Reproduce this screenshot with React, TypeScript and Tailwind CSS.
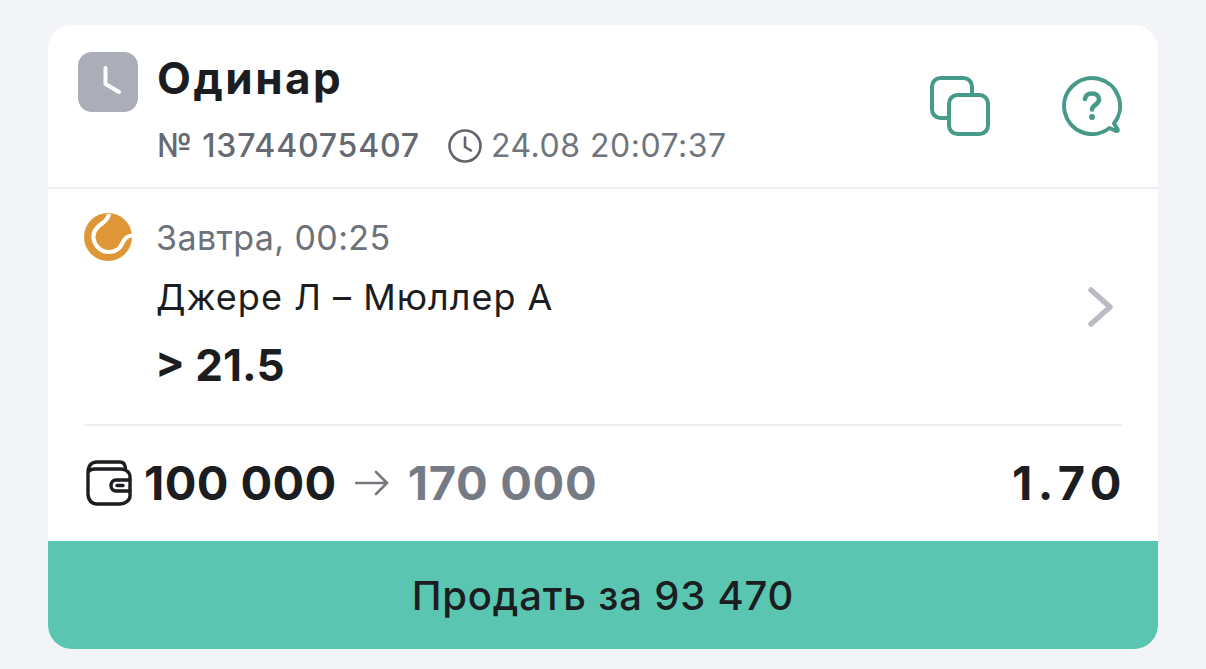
export default function App() {
  return (
    <div className="h-[669px] w-[1206px] overflow-hidden bg-[#f2f4f7] px-[48px] pt-[25px] text-[#1b1d20]" style={{ fontFamily: 'Inter, "Noto Sans", sans-serif' }}>
      <div className="flex h-[624px] w-[1110px] flex-col overflow-hidden rounded-[24px] bg-white">
        <header className="flex h-[164px] shrink-0 border-b-2 border-[#eceef0] pl-[30px] pr-[36px] pt-[27px]">
          <div className="flex h-[60px] w-[60px] shrink-0 items-center justify-center rounded-[14px] bg-[#abaeb9]">
            <svg width="60" height="60" viewBox="0 0 60 60" fill="none">
              <path d="M27.5 16V32L41 40" stroke="#fff" strokeWidth="4" strokeLinecap="round" strokeLinejoin="round" />
            </svg>
          </div>
          <div className="ml-[19px] flex-1">
            <div className="h-[52px] text-[44px] font-bold leading-[52px] tracking-[2.5px]">Одинар</div>
            <div className="mt-[22px] flex h-[40px] items-center text-[32px] leading-[40px]">
              <span className="w-[262px] whitespace-nowrap font-medium tracking-[0.8px] text-[#656a72]">№ 13744075407</span>
              <svg className="ml-[28px] shrink-0" width="36" height="36" viewBox="0 0 36 36" fill="none" stroke="#5f646c" strokeWidth="2.6" strokeLinecap="round" strokeLinejoin="round">
                <circle cx="18" cy="18" r="15.5" />
                <path d="M18 9.5V19L24 22.5" />
              </svg>
              <span className="ml-[8px] whitespace-nowrap tracking-[0.5px] text-[#70757d]">24.08 20:07:37</span>
            </div>
          </div>
          <div className="mt-[24px] flex h-[60px] items-start">
            <svg width="60" height="60" viewBox="0 0 60 60" fill="none" stroke="#479a89" strokeWidth="4" strokeLinejoin="round">
              <path d="M19 42H10.5C5.8 42 2 38.2 2 33.5V10.5C2 5.8 5.8 2 10.5 2H33.5C38.2 2 42 5.8 42 10.5V19" />
              <rect x="19" y="19" width="39" height="39" rx="8.5" />
            </svg>
            <svg className="ml-[72px]" width="60" height="60" viewBox="0 0 60 60" fill="none">
              <path d="M47.5 52A28 28 0 1 1 52 47.5L55.5 53Q56.5 55.5 54 55Z" stroke="#479a89" strokeWidth="4" strokeLinejoin="round" />
              <path d="M23 23C23.5 19 26.5 17.5 30 17.5C34.5 17.5 37 20 37 23.5C37 28.5 30.5 28.5 30 33.5" stroke="#479a89" strokeWidth="4.6" strokeLinecap="round" />
              <circle cx="30" cy="41" r="3" fill="#479a89" />
            </svg>
          </div>
        </header>

        <section className="relative flex h-[352px] flex-col pl-[36px] pr-[36px]">
          <div className="flex flex-1 flex-col">
            <div className="flex h-[88px] items-start pt-[24px]">
              <svg className="shrink-0" width="48" height="48" viewBox="0 0 48 48" fill="none">
                <circle cx="24" cy="24" r="24" fill="#de9636" />
                <path d="M25 1C24 7 20 9 16 12C11 16 9 20 9.5 25C10.5 33 17 39 24.5 39C32 39 36.5 35 38.5 30C40.5 25.5 43 23 48 22.5" stroke="#fff" strokeWidth="4.2" />
              </svg>
              <div className="ml-[24px] mt-[5px] whitespace-nowrap text-[34px] leading-[40px] tracking-[0.4px] text-[#6d7179]">Завтра, 00:25</div>
            </div>
            <div className="ml-[72px] flex h-[40px] items-center justify-between text-[36px] leading-[40px] tracking-[1px]">
              <span className="whitespace-nowrap">Джере Л – Мюллер А</span>
            </div>
            <div className="ml-[71px] mt-[23px] h-[50px] whitespace-nowrap text-[44px] font-bold leading-[50px]">&gt; 21.5</div>
          </div>
          <svg className="absolute right-[44px] top-[98px]" width="26" height="40" viewBox="0 0 26 40" fill="none">
            <path d="M3 3L22 20L3 37" stroke="#babcc3" strokeWidth="5.5" strokeLinecap="round" strokeLinejoin="round" />
          </svg>
          <div className="h-[2px] shrink-0 bg-[#eceef0]" />
          <div className="flex h-[115px] shrink-0 items-center justify-between pb-[1px]">
            <div className="flex items-center">
              <svg className="ml-[2px] shrink-0" width="46" height="46" viewBox="0 0 46 46" fill="none" stroke="#1b1d20" strokeWidth="3.4" strokeLinecap="round" strokeLinejoin="round">
                <path d="M2 13V34C2 40 6 44 11 44H34C39 44 44 40.5 44 36V17C44 12.5 40 9 35 9H9C5 9 2 11 2 13ZM2 13C2 6 5 2 11 2H34C37 2 39 4 39.5 8" />
                <path d="M44 20H30C27 20 25 22.5 25 25.5C25 28.5 27 31 30 31H44" />
                <path d="M31 25.5H37" />
              </svg>
              <span className="ml-[12px] whitespace-nowrap text-[47px] font-bold leading-[58px] tracking-[0.4px]">100 000</span>
              <svg className="ml-[18px] shrink-0" width="34" height="28" viewBox="0 0 34 28" fill="none" stroke="#75797f" strokeWidth="2.6" strokeLinecap="round" strokeLinejoin="round">
                <path d="M1 14H32M21 3L32 14L21 25" />
              </svg>
              <span className="ml-[19px] whitespace-nowrap text-[47px] font-bold leading-[58px] tracking-[0.7px] text-[#757a85]">170 000</span>
            </div>
            <span className="mr-[-5px] text-[47px] font-bold leading-[58px] tracking-[5.5px]">1.70</span>
          </div>
        </section>

        <button className="h-[108px] shrink-0 bg-[#5ac5b1] pt-[1px] text-center text-[40px] font-medium leading-[108px] tracking-[0.8px] text-[#1b1d20]">
          Продать за 93 470
        </button>
      </div>
    </div>
  );
}
